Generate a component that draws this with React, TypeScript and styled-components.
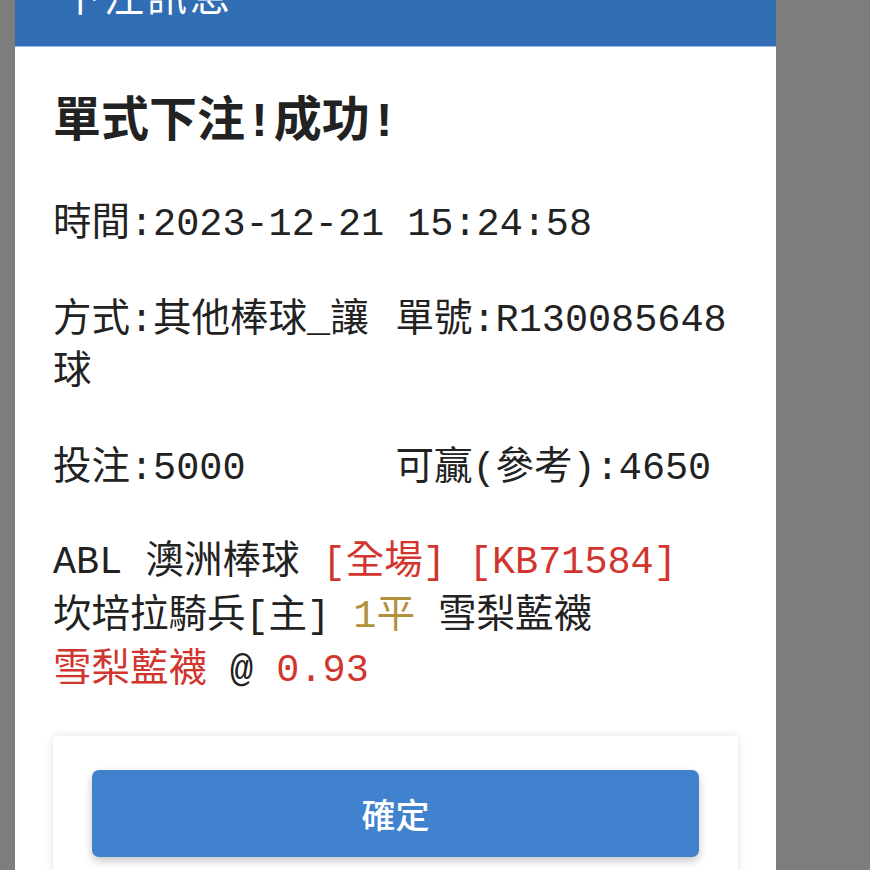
import React from 'react';
import styled, { createGlobalStyle } from 'styled-components';

const GlobalStyle = createGlobalStyle`
    html, body {
        margin: 0;
        padding: 0;
        background: #7d7d7d;
        overflow: hidden;
    }
    * {
        box-sizing: border-box;
    }
`
const Modal = styled.div`
    width: 761px;
    margin-left: 15px;
    margin-top: -44px;
    background: #ffffff;
    min-height: 960px;
`
const Header = styled.div`
    height: 91px;
    background: #316db3;
    border-bottom: 1px solid #9cbde4;
    padding: 14px 46px 0;
`
const HeaderTitle = styled.h2`
    margin: 0;
    font-family: "Noto Sans CJK TC", sans-serif;
    font-size: 40px;
    line-height: 48px;
    font-weight: 400;
    color: #ffffff;
    letter-spacing: 3px;
`
const Body = styled.div`
    padding: 46px 38px 0;
    display: flex;
    flex-direction: column;
`
const Title = styled.h1`
    margin: 0;
    font-family: "Liberation Mono", "Noto Sans CJK TC", monospace;
    font-size: 48px;
    line-height: 60px;
    font-weight: 700;
    color: #222222;
`
const InfoRow = styled.div<{ $cols?: boolean; $first?: boolean }>`
    display: grid;
    grid-template-columns: ${p => (p.$cols ? '1fr 1fr' : '1fr')};
    margin-top: ${p => (p.$first ? '46px' : '44px')};
    font-family: "Liberation Mono", "Noto Sans CJK TC", monospace;
    font-size: 38.5px;
    line-height: 52px;
    color: #222222;
`
const BetBlock = styled.div`
    margin-top: 41px;
    font-family: "Liberation Mono", "Noto Sans CJK TC", monospace;
    font-size: 38.5px;
    line-height: 54px;
    color: #222222;
`
const BetLine = styled.div`
    white-space: pre;
`
const Mark = styled.span<{ $tone: 'red' | 'gold' }>`
    color: ${p => (p.$tone === 'red' ? '#d1352e' : '#b3903a')};
`
const Card = styled.div`
    margin-top: 38px;
    background: #ffffff;
    border-radius: 4px;
    box-shadow: 0 0 8px rgba(0, 0, 0, 0.12);
    padding: 34px 39px 40px;
`
const ConfirmButton = styled.button`
    display: block;
    width: 100%;
    height: 87px;
    border: none;
    border-radius: 7px;
    background: #4182cf;
    box-shadow: 0 4px 9px rgba(0, 0, 0, 0.22);
    color: #ffffff;
    font-family: "Noto Sans CJK TC", sans-serif;
    font-size: 34px;
    font-weight: 500;
    cursor: pointer;
`

const App: React.FC = () => {
    return (
        <>
            <GlobalStyle />
            <Modal>
                <Header>
                    <HeaderTitle>下注訊息</HeaderTitle>
                </Header>
                <Body>
                    <Title>單式下注!成功!</Title>
                    <InfoRow $first>
                        <div>時間:2023-12-21 15:24:58</div>
                    </InfoRow>
                    <InfoRow $cols>
                        <div>方式:其他棒球_讓球</div>
                        <div>單號:R130085648</div>
                    </InfoRow>
                    <InfoRow $cols>
                        <div>投注:5000</div>
                        <div>可贏(參考):4650</div>
                    </InfoRow>
                    <BetBlock>
                        <BetLine>ABL 澳洲棒球 <Mark $tone="red">[全場]</Mark> <Mark $tone="red">[KB71584]</Mark></BetLine>
                        <BetLine>坎培拉騎兵[主] <Mark $tone="gold">1平</Mark> 雪梨藍襪</BetLine>
                        <BetLine><Mark $tone="red">雪梨藍襪</Mark> @ <Mark $tone="red">0.93</Mark></BetLine>
                    </BetBlock>
                    <Card>
                        <ConfirmButton>確定</ConfirmButton>
                    </Card>
                </Body>
            </Modal>
        </>
    );
};

export default App;
